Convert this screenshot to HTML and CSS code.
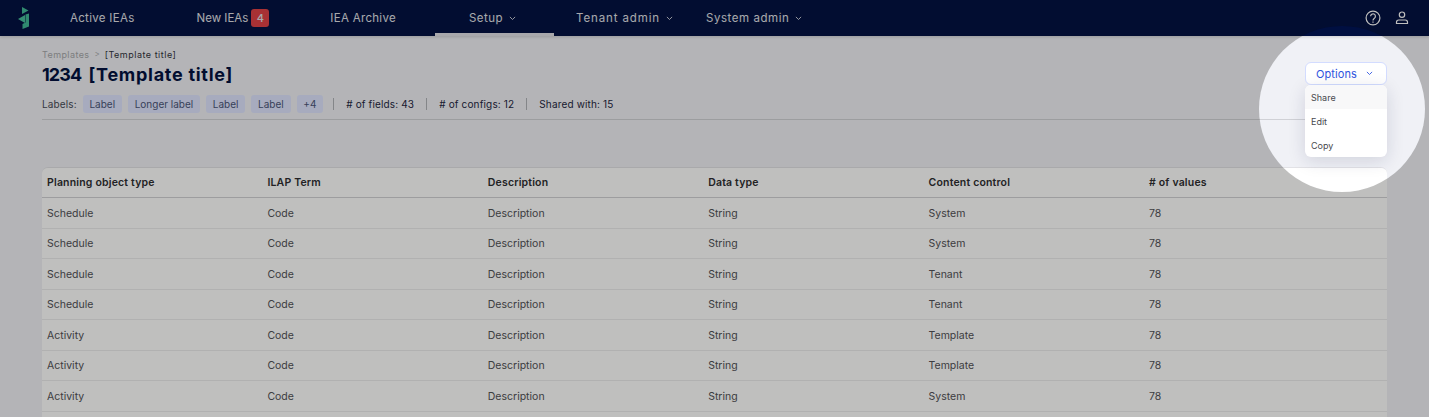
FILE: index.html
```html
<!DOCTYPE html>
<html lang="en">
<head>
<meta charset="utf-8">
<title>Template</title>
<link rel="stylesheet" href="styles.css">
</head>
<body>
<header class="topbar">
  <svg class="logo" viewBox="0 0 14 24" width="14" height="24" aria-hidden="true">
    <path class="logo-a" d="M4 1l6.500 3.500L4 8z"/>
    <path class="logo-b" d="M0 13l7-4v8z"/>
    <path class="logo-a" d="M7.500 8.500L11 7.500V20.500L4.500 23V18L7.500 16.500z"/>
  </svg>
  <nav class="nav">
    <a class="nav-item item-active">Active IEAs</a>
    <a class="nav-item item-new">New IEAs<span class="badge">4</span></a>
    <a class="nav-item item-archive">IEA Archive</a>
    <a class="nav-item item-setup">Setup<svg class="chev" viewBox="0 0 8 5"><path d="M1 1l3 3 3-3"/></svg></a>
    <a class="nav-item item-tenant">Tenant admin<svg class="chev" viewBox="0 0 8 5"><path d="M1 1l3 3 3-3"/></svg></a>
    <a class="nav-item item-system">System admin<svg class="chev" viewBox="0 0 8 5"><path d="M1 1l3 3 3-3"/></svg></a>
  </nav>
  <div class="top-icons">
    <svg class="icon" viewBox="0 0 16 16" width="16" height="16" aria-hidden="true">
      <circle cx="8" cy="8" r="6.900"/>
      <path d="M5.600 6.200a2.400 2.400 0 1 1 3.900 1.900c-.9.700-1.500 1.100-1.500 2.400"/>
      <path d="M8 11.600v1.200"/>
    </svg>
    <svg class="icon" viewBox="0 0 14 14" width="14" height="14" aria-hidden="true">
      <circle cx="7" cy="3.700" r="2.700"/>
      <path d="M1.500 12.500v-1.300c0-1.300 1-2.200 2.200-2.200h6.600c1.200 0 2.200.9 2.200 2.200v1.300z"/>
    </svg>
  </div>
</header>

<main class="page">
  <div class="breadcrumb">
    <span class="crumb-parent">Templates</span>
    <span class="crumb-sep">&gt;</span>
    <span class="crumb-current">[Template title]</span>
  </div>
  <div class="title-row">
    <h1 class="title"><span class="title-num">1234</span> <span class="title-name">[Template title]</span></h1>
    <div class="options">
      <button class="options-btn">Options<svg class="chev" viewBox="0 0 8 5"><path d="M1 1l3 3 3-3"/></svg></button>
      <ul class="menu">
        <li class="menu-item menu-hover">Share</li>
        <li class="menu-item">Edit</li>
        <li class="menu-item">Copy</li>
      </ul>
    </div>
  </div>
  <div class="meta">
    <span class="meta-label">Labels:</span>
    <span class="chip">Label</span>
    <span class="chip">Longer label</span>
    <span class="chip">Label</span>
    <span class="chip">Label</span>
    <span class="chip">+4</span>
    <span class="stat">#&nbsp;of fields: 43</span>
    <span class="stat">#&nbsp;of configs: 12</span>
    <span class="stat">Shared with: 15</span>
  </div>

  <div class="table-wrap">
    <table class="data">
      <thead>
        <tr><th>Planning object type</th><th>ILAP Term</th><th>Description</th><th>Data type</th><th>Content control</th><th># of values</th></tr>
      </thead>
      <tbody>
        <tr><td>Schedule</td><td>Code</td><td>Description</td><td>String</td><td>System</td><td>78</td></tr>
        <tr><td>Schedule</td><td>Code</td><td>Description</td><td>String</td><td>System</td><td>78</td></tr>
        <tr><td>Schedule</td><td>Code</td><td>Description</td><td>String</td><td>Tenant</td><td>78</td></tr>
        <tr><td>Schedule</td><td>Code</td><td>Description</td><td>String</td><td>Tenant</td><td>78</td></tr>
        <tr><td>Activity</td><td>Code</td><td>Description</td><td>String</td><td>Template</td><td>78</td></tr>
        <tr><td>Activity</td><td>Code</td><td>Description</td><td>String</td><td>Template</td><td>78</td></tr>
        <tr><td>Activity</td><td>Code</td><td>Description</td><td>String</td><td>System</td><td>78</td></tr>
      </tbody>
    </table>
  </div>
</main>

<div class="spotlight"></div>
</body>
</html>
```

FILE: styles.css
```css
* { box-sizing: border-box; }

html, body {
  margin: 0;
  height: 417px;
  overflow: hidden;
}

body {
  display: flex;
  flex-direction: column;
  background: #f0f1f6;
  font-family: "Inter", "Liberation Sans", sans-serif;
  color: #16203c;
}

.topbar {
  flex: none;
  height: 36px;
  display: flex;
  align-items: center;
  background: #000f41;
  box-shadow: 0 1px 3px rgba(0, 0, 0, .15);
}

.logo {
  margin-left: 18px;
  flex: none;
}
.logo-a { fill: #3fb896; }
.logo-b { fill: #46bd9b; }

.nav {
  display: flex;
  align-self: stretch;
  margin-left: 38px;
  flex: 1;
}

.nav-item {
  display: flex;
  align-items: center;
  height: 36px;
  font-size: 11.500px;
  letter-spacing: .3px;
  color: #ffffff;
  opacity: .88;
  white-space: nowrap;
}
.item-new { margin-left: 62px; letter-spacing: 0; }
.item-archive { margin-left: 61px; }
.item-setup {
  margin-left: 39px;
  width: 119px;
  padding-left: 34px;
  border-bottom: 3px solid #fff;
  padding-top: 3px;
  letter-spacing: .45px;
}
.item-tenant { margin-left: 22px; letter-spacing: .88px; }
.item-system { margin-left: 33px; letter-spacing: .55px; }

.badge {
  display: inline-flex;
  align-items: center;
  justify-content: center;
  width: 18px;
  height: 18px;
  margin-left: 3px;
  border-radius: 3px;
  background: #ff4746;
  color: #fff;
  font-size: 11px;
  font-weight: 500;
}

.chev {
  width: 7px;
  height: 4.400px;
  margin-left: 6px;
  fill: none;
  stroke: currentColor;
  stroke-width: 1;
}

.top-icons {
  display: flex;
  align-items: center;
  gap: 14px;
  margin-right: 20px;
}
.icon {
  fill: none;
  stroke: #fff;
  stroke-width: 1.200;
}

.page {
  flex: 1;
  min-height: 0;
  display: flex;
  flex-direction: column;
  padding: 12px 42px 0;
}

.breadcrumb {
  display: flex;
  align-items: center;
  height: 12px;
  font-size: 9px;
}
.crumb-parent { color: #a6a7aa; letter-spacing: .4px; }
.crumb-sep { color: #a6a7aa; margin: 0 5px; font-size: 8px; }
.crumb-current { color: #30323c; letter-spacing: .5px; }

.title-row {
  display: flex;
  justify-content: space-between;
  align-items: flex-start;
  margin-top: 2px;
}

.title {
  margin: 1px 0 0;
  font-size: 18px;
  line-height: 24px;
  font-weight: 700;
  color: #00103f;
  word-spacing: 3px;
}
.title-num { letter-spacing: -.9px; }
.title-name { letter-spacing: .72px; word-spacing: 0; }

.options {
  position: relative;
  width: 82px;
}
.options-btn {
  display: flex;
  align-items: center;
  width: 82px;
  height: 23px;
  padding: 0 0 0 10px;
  border: 1px solid #d3dcff;
  border-radius: 6px;
  background: #fff;
  color: #2f55e0;
  font: 400 11px "Inter", "Liberation Sans", sans-serif;
  letter-spacing: .1px;
}
.options-btn .chev { margin-left: 9px; }
.menu {
  position: absolute;
  top: 23px;
  left: 0;
  width: 82px;
  margin: 0;
  padding: 0;
  list-style: none;
  background: #fff;
  border-radius: 6px;
  overflow: hidden;
  box-shadow: 0 4px 18px rgba(20, 30, 70, .14);
}
.menu-item {
  height: 24px;
  display: flex;
  align-items: center;
  padding-left: 6px;
  font-size: 9px;
  color: #48494e;
}
.menu-hover { background: #f8f8f9; }

.meta {
  flex: none;
  display: flex;
  align-items: center;
  height: 33px;
  padding: 4px 0 2px;
  border-bottom: 1px solid #d0d1d6;
  font-size: 10px;
  color: #1c2440;
}
.meta-label { color: #464955; margin-right: 6px; letter-spacing: .12px; }
.chip {
  display: flex;
  align-items: center;
  height: 18px;
  padding: 0 6.800px;
  margin-right: 6px;
  border-radius: 3px;
  background: #dfe5ff;
  color: #4a5478;
}
.stat {
  display: flex;
  align-items: center;
  height: 12px;
  margin-left: 4px;
  padding-left: 12px;
  margin-right: 8px;
  border-left: 1px solid #b0b2b8;
  letter-spacing: .15px;
}

.table-wrap {
  flex: 1;
  min-height: 0;
  margin-top: 47px;
  background: #fff;
  border-top: 1px solid #e2e2e6;
  border-radius: 6px 6px 0 0;
  overflow: hidden;
}

.data {
  width: 100%;
  border-collapse: collapse;
  table-layout: fixed;
  font-size: 10.500px;
  color: #505055;
}
.data th {
  width: 220.400px;
  height: 29.500px;
  padding: 0 5px;
  text-align: left;
  font-weight: 600;
  color: #2c2c30;
  border-bottom: 1px solid #d2d2d6;
  letter-spacing: .18px;
}
.data th:last-child { width: auto; }
.data td {
  height: 30.500px;
  padding: 1px 5px 0;
  border-bottom: 1px solid #ececee;
}

.spotlight {
  position: fixed;
  left: 1259px;
  top: 26px;
  width: 166px;
  height: 166px;
  border-radius: 50%;
  box-shadow: 0 0 0 1500px rgba(6, 6, 2, .26);
  pointer-events: none;
}
```
